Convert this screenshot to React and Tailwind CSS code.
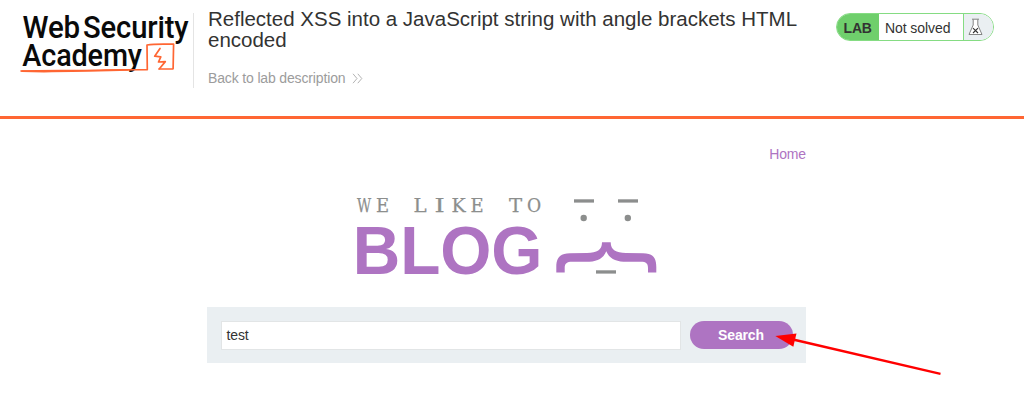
function AcademyLogo() {
  return (
    <svg className="h-[76px] w-[173px] shrink-0" viewBox="20 10 173 76" fill="none">
      <g fill="#0a0a0a" fontFamily="Roboto, sans-serif" fontWeight="500" fontSize="31.5">
        <text x="22.5" y="37.8" textLength="57.5" lengthAdjust="spacingAndGlyphs">Web</text>
        <text x="83" y="37.8" textLength="105.5" lengthAdjust="spacingAndGlyphs">Security</text>
        <text x="22.3" y="65.6" textLength="119.5" lengthAdjust="spacingAndGlyphs">Academy</text>
      </g>
      <g stroke="#ff6633" strokeWidth="1.7" strokeLinejoin="round" strokeLinecap="round">
        <path d="M21 71 C50 70.300 80 71 105 70 L147.300 69.600 L147 45 C156 43.800 165 44.500 173.600 44 L173.100 68.800 L159 69" />
        <path d="M22 71.200 L44 71.600 C75 70.700 100 70.900 128 69.900" />
        <path d="M160 48.500 L154.700 56.200 L160.800 56.800 L158.500 62 L165.300 61.600 L159.400 68.700" />
      </g>
    </svg>
  )
}

function Flask() {
  return (
    <svg className="h-[18px] w-[15px]" viewBox="0 0 15 18" fill="#fff" stroke="#777" strokeWidth="0.9">
      <path d="M5.200 1.500 V7 L1 16.500 H14 L9.800 7 V1.500" />
      <path d="M4 1.200 H11" />
      <path d="M5 10.200 L10 15 M10 10.200 L5 15" stroke="#333" strokeWidth="1.100" />
    </svg>
  )
}

const letters = [
  ['W', 357, 14], ['E', 376, 13], ['L', 413.500, 13], ['I', 434.500, 10], ['K', 451.500, 14],
  ['E', 470.500, 13], ['T', 509, 13], ['O', 527, 14],
]

function BlogLogo() {
  return (
    <svg className="h-[84px] w-[304px]" viewBox="355 194 304 84">
      <text y="212.300" fill="#8c8e8d" stroke="#8c8e8d" strokeWidth="0.250" fontFamily="'DejaVu Serif', serif" fontSize="18.5">
        {letters.map(([c, x, w], i) => (
          <tspan key={i} x={x} textLength={w} lengthAdjust="spacingAndGlyphs">{c}</tspan>
        ))}
      </text>
      <text x="352.800" y="273.700" fill="#ae74c2" fontFamily="'Liberation Sans', sans-serif" fontWeight="700" fontSize="69" textLength="189.500" lengthAdjust="spacingAndGlyphs">BLOG</text>
      <g fill="#8c8e8d">
        <rect x="574" y="199.300" width="20" height="3.300" />
        <rect x="618" y="199.300" width="20" height="3.300" />
        <circle cx="583.700" cy="218" r="3.200" />
        <circle cx="627.800" cy="218" r="3.200" />
        <rect x="596" y="270.300" width="20" height="3.300" />
      </g>
      <path fill="#ae74c2" d="M556.300 272.500 V267 C556.300 258 560 253.200 570 253.200 L587 253 C597 252.500 602 250 602 242.200 H610.700 C610.700 250 616 252.500 626 253 L643 253.200 C653 253.200 656.300 258 656.300 267 V272.500 H648 V268 C648 263.500 646 261.800 641 261.800 H627 C616 261.800 609.500 259 606.300 251.300 C603 259 597 261.800 586 261.800 H572 C567 261.800 564.700 263.500 564.700 268 V272.500 Z" />
    </svg>
  )
}

export default function App() {
  return (
    <div className="relative h-[400px] w-[1024px] overflow-hidden bg-white font-['Liberation_Sans',sans-serif] text-[14px] tracking-[-0.15px] text-[#333332]">
      <header className="flex h-[119px] items-start border-b-3 border-[#ff6633] pl-5">
        <div className="mt-[10px] flex">
          <AcademyLogo />
          <div className="mt-[3px] h-[75px] w-px bg-[#e4e4e4]" />
        </div>
        <div className="ml-[14px] mt-[8px] w-[600px]">
          <h1 className="text-[20.500px] leading-[21px] tracking-normal">Reflected XSS into a JavaScript string with angle brackets HTML encoded</h1>
          <a className="mt-[20px] flex h-4 items-center gap-[7px] text-[#9c9c9c]">
            Back to lab description
            <svg className="h-[11px] w-[11px]" viewBox="0 0 11 11" fill="none" stroke="#aaa" strokeWidth="0.9">
              <path d="M1 0.800 L5 5.500 L1 10.200 M5.800 0.800 L9.800 5.500 L5.800 10.200" />
            </svg>
          </a>
        </div>
        <div className="ml-[28px] mt-[13px] flex h-[28px] w-[158px] overflow-hidden rounded-full border border-[#85dc83] bg-white leading-[28px]">
          <span className="w-[41.500px] bg-[#6fcf6c] pl-[6.500px] font-bold">LAB</span>
          <span className="w-[84px] pl-[6.500px] tracking-[-0.080px]">Not solved</span>
          <span className="flex flex-1 items-center border-l border-[#85dc83] bg-[#eaeff2] pl-[4px]"><Flask /></span>
        </div>
      </header>
      <main className="ml-[207px] w-[599px]">
        <nav className="flex h-[70px] justify-end pt-[26px] leading-[18px] text-[#ae74c2]">Home</nav>
        <div className="mt-[5px] flex h-[113px] justify-center"><BlogLogo /></div>
        <div className="flex h-[56px] items-center gap-[9px] bg-[#eaeff2] px-[13.500px]">
          <div className="h-[29px] w-[460px] border border-[#e2e5e6] bg-white pl-[5px] leading-[27px]">test</div>
          <button className="h-[28px] w-[103px] rounded-full bg-[#ae74c2] font-bold text-white">Search</button>
        </div>
      </main>
      <svg className="absolute left-[770px] top-[325px] h-[60px] w-[180px]" viewBox="770 325 180 60">
        <path d="M793 339.500 L940.500 373.800" stroke="#f00" strokeWidth="2.400" />
        <path d="M775.300 336 L796.500 333.500 L793.300 346.800 Z" fill="#f00" />
      </svg>
    </div>
  )
}
